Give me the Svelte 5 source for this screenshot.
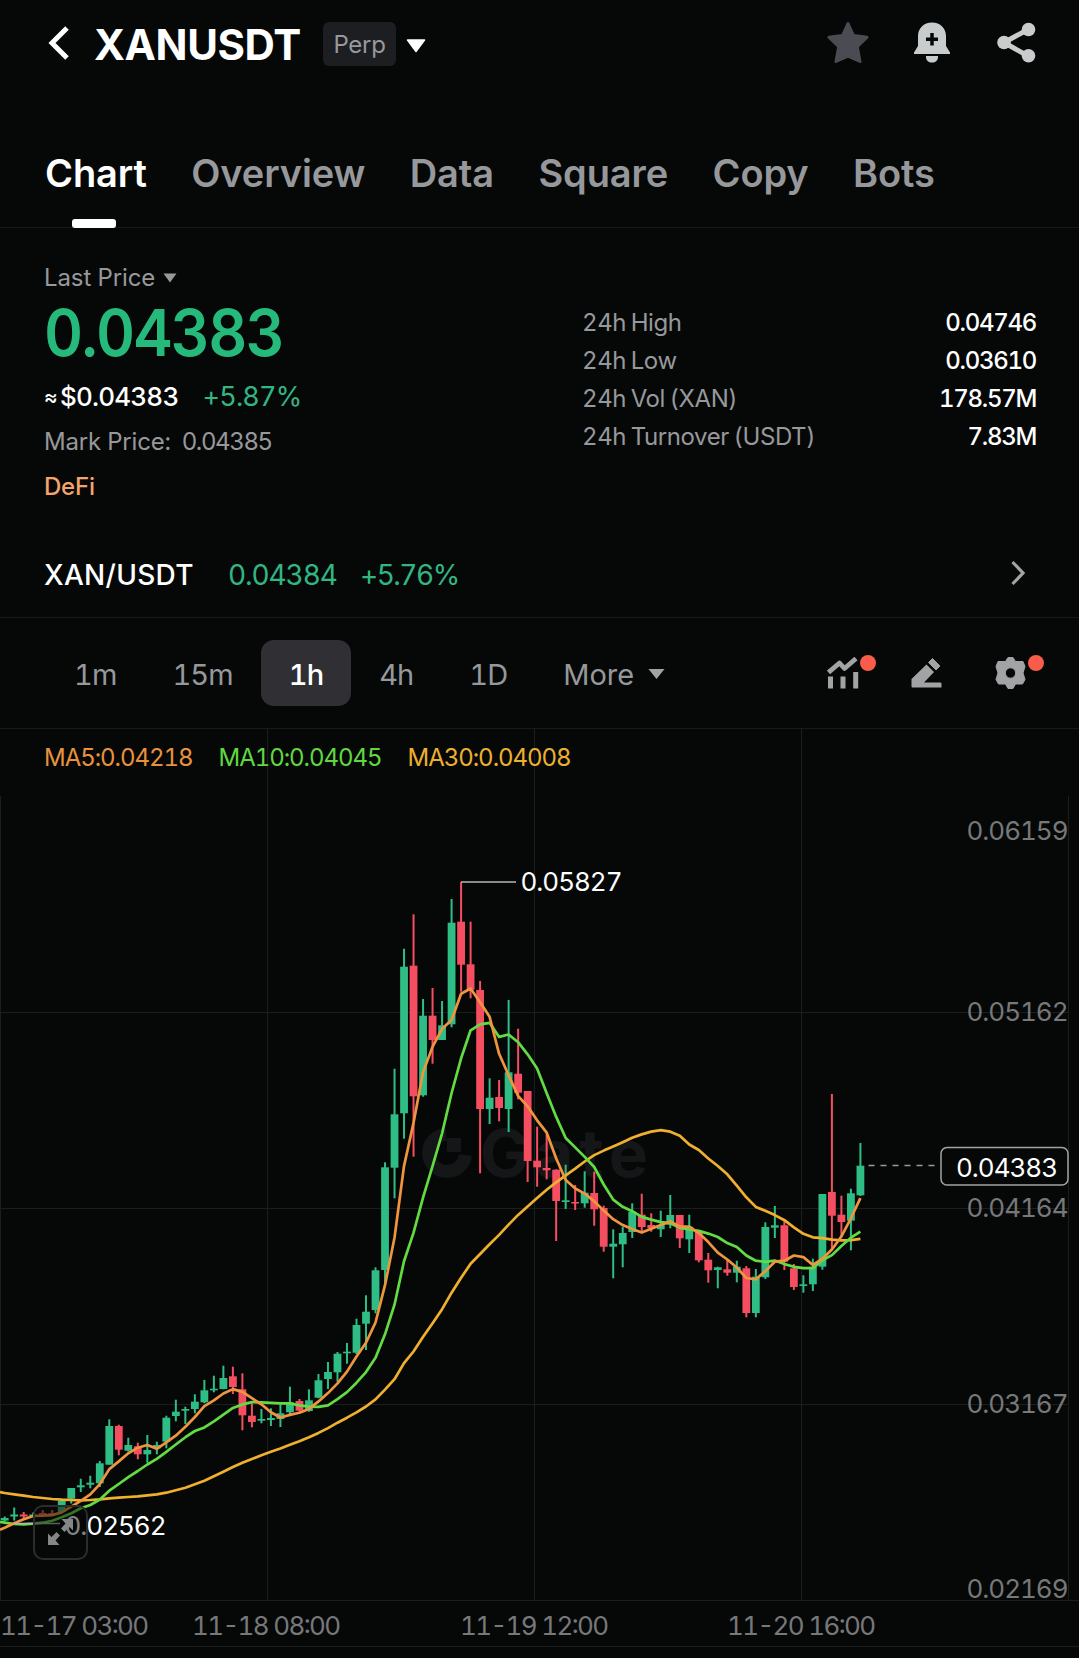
<script lang="ts">
    interface Candle {
        high: number;
        top: number;
        bottom: number;
        low: number;
        up: boolean;
    }

    const tabs = ["Chart", "Overview", "Data", "Square", "Copy", "Bots"];
    const frames = ["1m", "15m", "1h", "4h", "1D"];

    const stats = [
        { label: "24h High", value: "0.04746" },
        { label: "24h Low", value: "0.03610" },
        { label: "24h Vol (XAN)", value: "178.57M" },
        { label: "24h Turnover (USDT)", value: "7.83M" }
    ];

    const legend = [
        { name: "ma5", text: "MA5:0.04218" },
        { name: "ma10", text: "MA10:0.04045" },
        { name: "ma30", text: "MA30:0.04008" }
    ];

    const priceLabels = [
        { y: 830, text: "0.06159" },
        { y: 1011, text: "0.05162" },
        { y: 1207.5, text: "0.04164" },
        { y: 1403, text: "0.03167" },
        { y: 1588, text: "0.02169" }
    ];

    const timeLabels = [
        { x: 0, text: "11-17 03:00" },
        { x: 192, text: "11-18 08:00" },
        { x: 460, text: "11-19 12:00" },
        { x: 727, text: "11-20 16:00" }
    ];

    let activeTab = $state("Chart");
    let activeFrame = $state("1h");

    // high, body top, body bottom, low, 1 = up / 0 = down
    const rows = [
        [1516.5, 1518, 1520.5, 1521, 1],
        [1507.5, 1514.5, 1516.5, 1520.5, 1],
        [1512, 1514.5, 1516.5, 1519, 0],
        [1512.5, 1514.5, 1516.5, 1517, 1],
        [1510, 1513, 1515, 1517, 0],
        [1510, 1513, 1515, 1516, 0],
        [1500, 1501, 1512, 1513, 1],
        [1488, 1488, 1498.7, 1503.5, 1],
        [1478.7, 1485.3, 1487.3, 1492, 1],
        [1475.7, 1482.7, 1484.7, 1488.3, 1],
        [1461, 1463.3, 1483.3, 1487, 1],
        [1419.3, 1426, 1464.7, 1464.7, 1],
        [1424.7, 1426, 1449.7, 1455.3, 0],
        [1437.7, 1445, 1450.7, 1451.7, 1],
        [1442.7, 1446.3, 1454.3, 1459.3, 0],
        [1435, 1450, 1454.3, 1462.7, 1],
        [1441.7, 1445, 1448.3, 1454.3, 1],
        [1415.7, 1417.7, 1441.7, 1448.3, 1],
        [1399.7, 1411.7, 1416, 1421.3, 1],
        [1406.7, 1409, 1410.7, 1424, 1],
        [1394.3, 1401.7, 1409, 1413.3, 1],
        [1380, 1390.3, 1402.3, 1403.3, 1],
        [1375.7, 1388.7, 1390.3, 1392.3, 1],
        [1365.7, 1378, 1389, 1389.3, 1],
        [1366.7, 1376.3, 1387, 1394, 0],
        [1373.3, 1389.3, 1415.3, 1430.3, 0],
        [1403.3, 1415.7, 1422, 1427.3, 0],
        [1409, 1419, 1420.7, 1423.3, 1],
        [1408.3, 1418, 1420, 1426, 1],
        [1404.3, 1413.3, 1419, 1427, 1],
        [1386.7, 1402.3, 1412.3, 1414, 1],
        [1399, 1401, 1410.7, 1411.7, 0],
        [1389.3, 1400.3, 1411, 1411.7, 1],
        [1374, 1380.3, 1397.7, 1398.3, 1],
        [1362, 1372, 1379, 1389, 1],
        [1352, 1353.7, 1372.3, 1381.7, 1],
        [1343, 1351.7, 1353.3, 1363.7, 1],
        [1318.7, 1325, 1352.7, 1354, 1],
        [1295.3, 1311.7, 1323.7, 1350, 1],
        [1267.3, 1270.3, 1310, 1313.3, 1],
        [1162.3, 1167.3, 1270, 1283.3, 1],
        [1068.7, 1114.3, 1167.7, 1198.3, 1],
        [948.7, 966.7, 1113.3, 1138.7, 1],
        [914.3, 965.7, 1096.3, 1156.7, 0],
        [999, 1015.7, 1095.3, 1096.7, 1],
        [988, 1015.7, 1040, 1063.7, 0],
        [1001, 1025.3, 1040, 1040, 1],
        [899, 922.7, 1024.3, 1027.3, 1],
        [882, 921.7, 964.7, 991.7, 0],
        [921.7, 964.3, 989.7, 998.3, 0],
        [981, 990, 1109, 1173.3, 0],
        [1078.3, 1097.7, 1109, 1124, 1],
        [1080, 1097, 1108, 1121.3, 0],
        [1000, 1072.3, 1109, 1132, 1],
        [1028.7, 1073.7, 1092.7, 1099.3, 0],
        [1091, 1091, 1161, 1182, 0],
        [1126.7, 1160.7, 1167.3, 1186.7, 0],
        [1134, 1168, 1170.3, 1179.3, 0],
        [1169.3, 1169.7, 1201, 1241, 0],
        [1164.7, 1200.3, 1202, 1209, 1],
        [1185, 1202, 1203.5, 1210, 0],
        [1171.3, 1192.7, 1203.3, 1207.7, 1],
        [1171.7, 1193, 1209.3, 1225.7, 0],
        [1205.7, 1208, 1246.7, 1251.7, 0],
        [1229.3, 1243.7, 1246.7, 1278.3, 1],
        [1226.7, 1233, 1244.3, 1267.3, 1],
        [1203.3, 1211.7, 1232, 1238, 1],
        [1193.7, 1214.7, 1227, 1231, 0],
        [1213.3, 1225, 1228.3, 1231.7, 0],
        [1210.7, 1225, 1229.3, 1237, 1],
        [1195, 1215, 1224.7, 1228.3, 1],
        [1215, 1215, 1238.3, 1248, 0],
        [1214.7, 1226.7, 1239.3, 1253, 1],
        [1230, 1231.7, 1260.3, 1262.3, 0],
        [1253, 1259.7, 1270.3, 1282.7, 0],
        [1266.7, 1267.3, 1270, 1288.3, 1],
        [1260, 1269.3, 1272.7, 1275.7, 0],
        [1260.7, 1266.7, 1272.7, 1282.3, 1],
        [1266, 1268.3, 1313, 1317.3, 0],
        [1269, 1276.7, 1313, 1317.3, 1],
        [1222.3, 1227, 1277.3, 1279, 1],
        [1206, 1225.3, 1227.7, 1238, 1],
        [1221.3, 1225.3, 1261.7, 1270, 0],
        [1264, 1268.3, 1287, 1290, 0],
        [1275.3, 1284.3, 1286, 1292.7, 1],
        [1258.7, 1266.7, 1284.3, 1291, 1],
        [1194, 1194, 1266.7, 1269.7, 1],
        [1094, 1192, 1215.7, 1250, 0],
        [1195.7, 1214.7, 1222, 1236.7, 0],
        [1188.7, 1193.3, 1220.7, 1250.3, 1],
        [1143, 1165.7, 1195.3, 1196, 1]
    ];

    const candles: Candle[] = rows.map(([high, top, bottom, low, up]) => ({
        high, top, bottom, low, up: up === 1
    }));

    const step = 9.508;
    const firstX = 4.7;
    const xAt = (i: number) => firstX + i * step;

    // averages for the first candles come from before the visible window
    const lead5 = [1527.7, 1523.3, 1519.3, 1516];
    const lead10 = [1522.7, 1524, 1524.3, 1523.7, 1522.7, 1520.7, 1517.3, 1513.3, 1508.3];
    const lead30 = [
        1493, 1494.3, 1495.7, 1497, 1498, 1499, 1499.7, 1500, 1500.3, 1500,
        1499.3, 1498.3, 1497.7, 1497, 1496.3, 1495.3, 1494.3, 1492.7, 1490.3, 1487.7,
        1484.3, 1480.7, 1476.3, 1471.7, 1467, 1462.7, 1459, 1455.3, 1451.7
    ];

    function average(period: number, lead: number[], start: number): string {
        const closes = candles.map((c) => (c.up ? c.top : c.bottom));
        const points = closes.map((_, i) => {
            let y = lead[i];
            if (i >= period - 1) {
                y = closes.slice(i - period + 1, i + 1).reduce((a, b) => a + b, 0) / period;
            }
            return `${xAt(i).toFixed(1)},${y.toFixed(1)}`;
        });
        return `0,${start} ` + points.join(" ");
    }

    const ma5 = average(5, lead5, 1529.7);
    const ma10 = average(10, lead10, 1522);
    const ma30 = average(30, lead30, 1492);
</script>

<main>
    <header>
        <svg class="back" width="22" height="36" viewBox="0 0 22 36">
            <path d="M19 3L4 18L19 33" fill="none" stroke="#fff" stroke-width="5" />
        </svg>
        <h1>XANUSDT</h1>
        <span class="perp">Perp</span>
        <svg class="caret" width="20" height="14" viewBox="0 0 20 14">
            <path d="M1.5 1H18.5L10 12.5Z" fill="#fff" stroke="#fff" stroke-width="1.5" stroke-linejoin="round" />
        </svg>
        <div class="actions">
            <svg width="42" height="42" viewBox="0 0 42 42">
                <path d="M21 2.5L26.5 14.5L40 16.2L30.3 25.7L33 40.5L21 35.2L9 40.5L11.7 25.7L2 16.2L15.5 14.5Z" fill="#4a4b53" stroke="#4a4b53" stroke-width="3" stroke-linejoin="round" />
            </svg>
            <svg width="42" height="42" viewBox="0 0 42 42">
                <path d="M21 1.5C12.5 1.5 7 7.5 7 15V25L3 31.5V33H39V31.5L35 25V15C35 7.5 29.5 1.5 21 1.5Z" fill="#c9cccc" />
                <path d="M15 35H27V36C27 39.5 24.5 41.5 21 41.5S15 39.5 15 36Z" fill="#c9cccc" />
                <path d="M21 12V24.5M15 18.2H27" stroke="#060808" stroke-width="3.5" />
            </svg>
            <svg width="42" height="42" viewBox="0 0 42 42">
                <path d="M33 8.5L9 21.5L33 35" fill="none" stroke="#c9cccc" stroke-width="5" />
                <circle cx="33.5" cy="8.5" r="6.8" fill="#c9cccc" />
                <circle cx="9" cy="21.5" r="6.8" fill="#c9cccc" />
                <circle cx="33.5" cy="34.8" r="6.8" fill="#c9cccc" />
            </svg>
        </div>
    </header>

    <nav>
        {#each tabs as tab}
            <button class:active={tab === activeTab} onclick={() => (activeTab = tab)}>{tab}</button>
        {/each}
    </nav>

    <section class="summary">
        <div class="price-info">
            <div class="last">
                Last Price
                <svg width="14" height="10" viewBox="0 0 14 10"><path d="M0.5 0.5H13.5L7 9.5Z" fill="#97989b" /></svg>
            </div>
            <div class="price">0.04383</div>
            <div class="usd"><span class="approx">≈</span><span>$0.04383</span><span class="change">+5.87%</span></div>
            <div class="mark"><span>Mark Price:</span><span class="mark-value">0.04385</span></div>
            <div class="sector">DeFi</div>
        </div>
        <div class="stats">
            {#each stats as stat}
                <div class="stat">
                    <span>{stat.label}</span>
                    <b>{stat.value}</b>
                </div>
            {/each}
        </div>
    </section>

    <section class="pair">
        <span class="pair-name">XAN/USDT</span>
        <span class="pair-price">0.04384</span>
        <span class="pair-change">+5.76%</span>
        <svg width="14" height="26" viewBox="0 0 14 26">
            <path d="M1.5 2L12 13L1.5 24" fill="none" stroke="#a2a3a5" stroke-width="3.2" />
        </svg>
    </section>

    <section class="frames">
        {#each frames as frame}
            <button class:active={frame === activeFrame} onclick={() => (activeFrame = frame)}>{frame}</button>
        {/each}
        <button class="more">
            More
            <svg width="17" height="12" viewBox="0 0 17 12"><path d="M0.5 1H16.5L8.5 11Z" fill="#a2a3a5" /></svg>
        </button>
        <div class="tools">
            <div class="tool">
                <svg width="32" height="34" viewBox="0 0 32 34">
                    <path d="M1.5 16.5L12.5 7L17.5 12.5L29 2.5" fill="none" stroke="#a2a3a5" stroke-width="4.8" stroke-linejoin="round" />
                    <path d="M3.5 20.5V32.5M16 20.5V32.5M28.7 16V32.5" stroke="#a2a3a5" stroke-width="5" />
                </svg>
                <i class="dot"></i>
            </div>
            <div class="tool">
                <svg width="32" height="34" viewBox="0 0 32 34">
                    <path d="M0.5 23L15.5 8.5L23 16L13 26.5H29C30 26.5 30.5 27 30.5 28V31.5H2C1 31.5 0.5 31 0.5 30Z" fill="#a2a3a5" />
                    <path d="M17.5 6.5L21.5 2.5L29 10L25 14Z" fill="#a2a3a5" stroke="#a2a3a5" stroke-linejoin="round" />
                </svg>
            </div>
            <div class="tool">
                <svg width="32" height="34" viewBox="0 0 32 34">
                    <path fill-rule="evenodd" d="M13 1.5H18L20.5 5.5H28L30 10.5L28 17L30 23.5L27.5 28H20.5L18 32.5H13L10.5 28H3.5L1 23.5L3 17L1 10.5L3 5.5H10.5ZM15.5 11.8A5.2 5.2 0 1 0 15.5 22.2A5.2 5.2 0 1 0 15.5 11.8Z" fill="#a2a3a5" stroke="#a2a3a5" stroke-linejoin="round" />
                </svg>
                <i class="dot"></i>
            </div>
        </div>
    </section>

    <section class="chart">
        <svg class="plot" width="1079" height="929" viewBox="0 729 1079 929">
            <g class="grid">
                <path d="M267.5 729V1600M534.5 729V1600M801.5 729V1600" />
                <path d="M0.5 796V1600M1068.5 796V1600" />
                <path d="M0 1012.5H1069M0 1208.5H1069M0 1404.5H1069M0 1600.5H1079M0 1646.5H1079" />
            </g>

            <g class="watermark">
                <path d="M446 1134.5A18.5 18.5 0 1 0 465.5 1155" />
                <rect x="447" y="1138" width="14" height="14" />
                <text x="480" y="1177" textLength="168">Gate</text>
            </g>

            {#each candles as candle, i}
                <g class={candle.up ? "up" : "down"}>
                    <rect x={xAt(i) - 1} y={candle.high} width="2" height={candle.low - candle.high} />
                    <rect x={xAt(i) - 3.9} y={candle.top} width="7.8" height={candle.bottom - candle.top} />
                </g>
            {/each}

            <polyline class="line ma30" points={ma30} />
            <polyline class="line ma10" points={ma10} />
            <polyline class="line ma5" points={ma5} />

            <path class="pointer" d="M461 882H516" />
            <text class="extreme" x="520.5" y="891" textLength="102">0.05827</text>
            <path class="pointer" d="M14 1523.5H60" />
            <text class="extreme" x="64.5" y="1535" textLength="102">0.02562</text>

            {#each priceLabels as label}
                <text class="axis" x="966.5" y={label.y + 9.5} textLength="102">{label.text}</text>
            {/each}
            {#each timeLabels as label}
                <text class="axis" x={label.x} y="1635" textLength="149">{label.text}</text>
            {/each}

            <path class="current" d="M868.5 1165.5H937" />
            <rect class="tag" x="941" y="1147.5" width="127" height="37.5" rx="6" />
            <text class="extreme" x="956" y="1176.5" textLength="102">0.04383</text>
        </svg>

        <div class="legend">
            {#each legend as item}
                <span class={item.name}>{item.text}</span>
            {/each}
        </div>

        <button class="expand" aria-label="Expand chart">
            <svg width="27" height="27" viewBox="0 0 27 27" fill="#858686">
                <path d="M1 14.5L4.5 18L9.5 13L13 16.5L8.5 21.5L12.5 26H1Z" />
                <path d="M26 11.5L22.5 8L17.5 13L14 9.5L18.5 4.5L14.5 0H26Z" />
            </svg>
        </button>
    </section>
</main>

<style>
    :global(body) {
        margin: 0;
        background: #060808;
    }

    main {
        display: flex;
        flex-direction: column;
        width: 1079px;
        height: 1658px;
        overflow: hidden;
        background: #060808;
        color: #fff;
        font-family: Inter, "Liberation Sans", sans-serif;
        font-variant-numeric: tabular-nums;
    }

    button {
        background: none;
        border: none;
        padding: 0;
        margin: 0;
        font: inherit;
        font-variant-numeric: inherit;
        letter-spacing: inherit;
        color: inherit;
    }

    svg {
        display: block;
        flex: none;
    }

    header {
        display: flex;
        align-items: center;
        height: 87px;
        padding: 0 42px 0 48px;
        box-sizing: border-box;
    }

    .back {
        margin-top: -2px;
    }

    h1 {
        margin: 1px 0 0 24px;
        width: 206px;
        font-size: 42px;
        font-weight: 700;
        letter-spacing: -0.4px;
    }

    .perp {
        width: 73px;
        height: 44px;
        margin-left: 23px;
        border-radius: 6px;
        background: #1d1e22;
        color: #97989b;
        font-size: 24px;
        line-height: 45px;
        letter-spacing: -0.3px;
        text-align: center;
    }

    .caret {
        margin: 4px 0 0 10px;
    }

    .actions {
        display: flex;
        gap: 42px;
        margin: -3px 0 0 auto;
    }

    nav {
        display: flex;
        gap: 44.4px;
        height: 141px;
        padding: 63px 45px 0;
        box-sizing: border-box;
        border-bottom: 1px solid #17191a;
        color: #97989b;
        font-size: 38px;
        font-weight: 600;
        line-height: 46px;
        letter-spacing: -0.1px;
    }

    nav button {
        position: relative;
        height: 46px;
    }

    nav .active {
        color: #fff;
    }

    nav .active::after {
        content: "";
        position: absolute;
        left: 50%;
        top: 69px;
        width: 44px;
        height: 9px;
        margin-left: -24px;
        border-radius: 3px;
        background: #fff;
    }

    .summary {
        display: grid;
        grid-template-columns: 538px 454px;
        height: 303px;
        padding: 35px 0 0 44px;
        box-sizing: border-box;
        color: #97989b;
        font-size: 24px;
        line-height: 30px;
        letter-spacing: -0.2px;
    }

    .price-info {
        display: flex;
        flex-direction: column;
        gap: 14.5px;
    }

    .last {
        display: flex;
        align-items: center;
        gap: 8px;
        letter-spacing: -0.1px;
    }

    /* digits are drawn slightly condensed */
    .price {
        margin-top: -9.5px;
        color: #26b97c;
        font-size: 65px;
        font-weight: 600;
        line-height: 70px;
        letter-spacing: -1.8px;
        transform: scaleX(0.93);
        transform-origin: left;
    }

    .usd {
        display: flex;
        margin-top: -1px;
        color: #fff;
        font-size: 26px;
        font-weight: 500;
        letter-spacing: -0.8px;
    }

    .approx {
        width: 16px;
        font-size: 21px;
    }

    .change {
        margin-left: 24px;
        color: #33b583;
        font-size: 27px;
        font-weight: 400;
    }

    .mark {
        display: flex;
        gap: 11px;
        margin-top: 1px;
    }

    .mark-value {
        letter-spacing: -1.4px;
    }

    .sector {
        color: #f3a468;
        font-weight: 500;
    }

    .stats {
        padding-top: 41px;
    }

    .stat {
        display: flex;
        justify-content: space-between;
        line-height: 38px;
        letter-spacing: -0.4px;
        word-spacing: -1.5px;
    }

    .stat b {
        color: #fff;
        font-weight: 500;
        letter-spacing: -1.3px;
    }

    .pair {
        display: flex;
        align-items: center;
        height: 87px;
        padding: 1px 54px 0 44px;
        box-sizing: border-box;
        border-bottom: 1px solid #17191a;
        font-size: 28px;
    }

    .pair-name {
        width: 184px;
        font-weight: 500;
        letter-spacing: 0.3px;
    }

    .pair-price {
        width: 132px;
        color: #33b583;
        letter-spacing: -1.1px;
    }

    .pair-change {
        color: #33b583;
        letter-spacing: -1.5px;
    }

    .pair svg {
        margin: -3px 0 0 auto;
    }

    .frames {
        display: flex;
        align-items: center;
        height: 111px;
        padding: 0 52px 0 46px;
        box-sizing: border-box;
        border-bottom: 1px solid #17191a;
        color: #97989b;
        font-size: 29px;
        letter-spacing: -0.9px;
    }

    .frames button {
        height: 66px;
        padding: 2px 28px 0;
        border-radius: 13px;
    }

    .frames .active {
        background: #303034;
        color: #fff;
        font-weight: 500;
    }

    .frames .more {
        display: flex;
        align-items: center;
        gap: 14px;
        letter-spacing: 0;
    }

    .tools {
        display: flex;
        gap: 52px;
        margin: -1px 0 0 auto;
    }

    .tool {
        position: relative;
    }

    .dot {
        position: absolute;
        left: 33px;
        top: -1px;
        width: 16px;
        height: 16px;
        border-radius: 50%;
        background: #f75d48;
    }

    .chart {
        position: relative;
        height: 929px;
    }

    .legend {
        position: absolute;
        left: 44px;
        top: 14px;
        display: flex;
        gap: 26px;
        font-size: 24px;
        line-height: 30px;
        letter-spacing: -1.05px;
    }

    .legend .ma5 {
        color: #e8923c;
    }

    .legend .ma10 {
        color: #5fd840;
    }

    .legend .ma30 {
        color: #edb02e;
    }

    .grid path {
        fill: none;
        stroke: #1b1d1e;
    }

    .watermark {
        fill: #141617;
    }

    .watermark path {
        fill: none;
        stroke: #141617;
        stroke-width: 13;
    }

    .watermark text {
        font-size: 66px;
        font-weight: 700;
    }

    .up {
        fill: #2ebd85;
    }

    .down {
        fill: #f64e61;
    }

    .line {
        fill: none;
        stroke-width: 2.7;
        stroke-linejoin: round;
    }

    .line.ma5 {
        stroke: #f0953f;
    }

    .line.ma10 {
        stroke: #62dc42;
    }

    .line.ma30 {
        stroke: #f0b02d;
    }

    .pointer {
        stroke: #b4b5b5;
        stroke-width: 1.5;
    }

    .extreme {
        fill: #fff;
        font-size: 26px;
    }

    .axis {
        fill: #77787a;
        font-size: 26px;
    }

    .current {
        stroke: #97989b;
        stroke-width: 1.6;
        stroke-dasharray: 6 6;
    }

    .tag {
        fill: #060808;
        stroke: #a2a3a5;
        stroke-width: 1.5;
    }

    .expand {
        position: absolute;
        left: 33px;
        top: 776px;
        display: flex;
        align-items: center;
        justify-content: center;
        width: 55px;
        height: 55px;
        box-sizing: border-box;
        border: 2px solid #2b2d2d;
        border-radius: 10px;
        background: rgba(6, 8, 8, 0.5);
    }
</style>
